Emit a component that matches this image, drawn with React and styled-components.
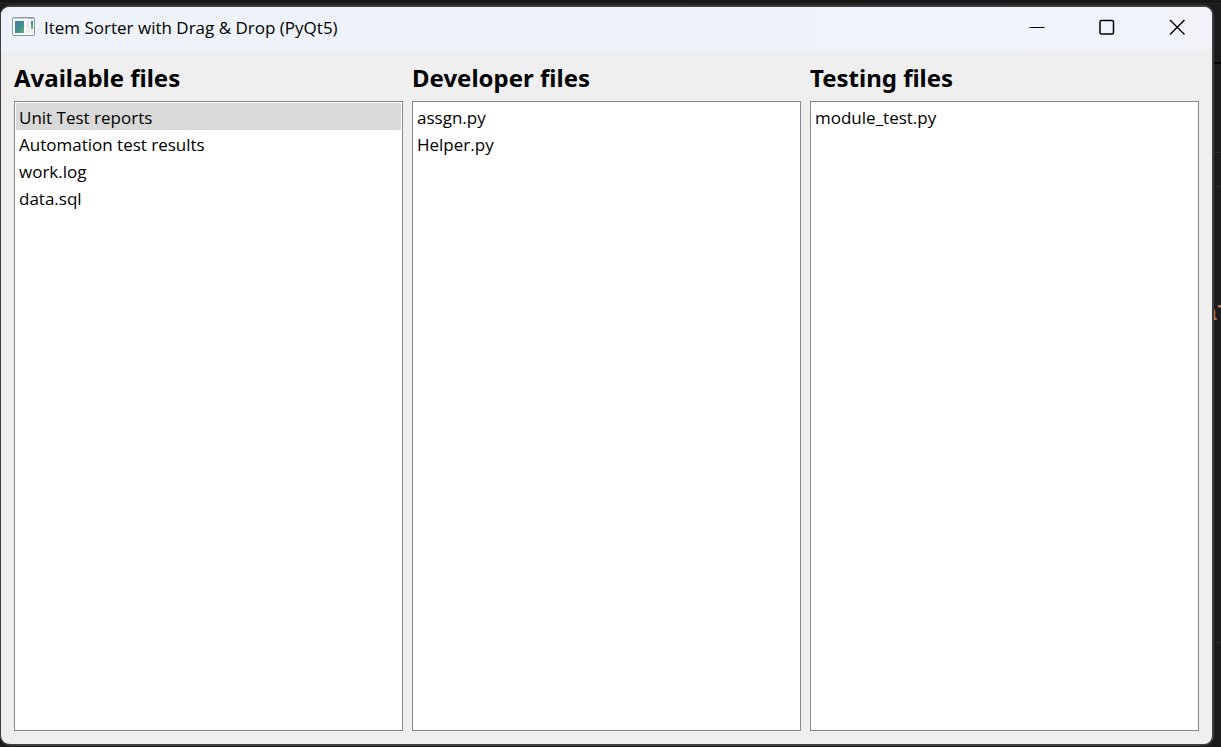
import React, { useState } from 'react';
import styled, { createGlobalStyle } from 'styled-components';

const GlobalStyle = createGlobalStyle`
  *, *::before, *::after { box-sizing: border-box; }
  body {
    margin: 0;
    background: #1c1c1c;
    color: #000;
    font-family: 'Open Sans', 'Noto Sans', sans-serif;
  }
`;

const Desktop = styled.div`
  position: relative;
  display: flex;
  height: 100vh;
  padding: 5px 7px 1px 0;
  overflow: hidden;
  background: linear-gradient(#181818 3px, #262626 3px, #262626 4px, #1c1c1c 4px);
`;

const EditorRule = styled.span`
  position: absolute;
  right: 0;
  top: ${(p) => p.$top}px;
  width: 8px;
  height: ${(p) => p.$height || 1}px;
  background: ${(p) => p.$color || '#2a2a2a'};
`;

const EditorText = styled.span`
  position: absolute;
  left: calc(100% - 17px);
  top: 303px;
  color: #b5765a;
  font: 700 22px/24px 'Liberation Mono', monospace;
  white-space: nowrap;
`;

const Window = styled.main`
  position: relative;
  flex: 1;
  min-width: 0;
  display: flex;
  flex-direction: column;
  overflow: hidden;
  border: 2px solid #3e3e3e;
  border-left-width: 1px;
  border-radius: 10px;
  background: #efefef;
`;

const TitleBar = styled.header`
  display: flex;
  align-items: center;
  height: 43px;
  padding: 0 0 4px 11px;
  background: linear-gradient(90deg, #edf3f8, #eff3fb 80%, #f1f3f9);
`;

const Title = styled.h1`
  flex: 1;
  margin: 0 0 0 8px;
  padding-top: 2px;
  font-size: 17px;
  line-height: 24px;
  font-weight: 400;
`;

const WindowControls = styled.div`
  display: flex;
  align-self: stretch;
`;

const ControlButton = styled.button`
  display: flex;
  align-items: center;
  justify-content: center;
  width: 70px;
  padding: 0;
  border: 0;
  background: transparent;
  color: #000;
`;

const Columns = styled.div`
  flex: 1;
  min-height: 0;
  display: grid;
  grid-template-columns: repeat(3, minmax(0, 1fr));
  gap: 9px;
  padding: 13px;
`;

const Column = styled.section`
  display: flex;
  flex-direction: column;
  min-height: 0;
`;

const ColumnTitle = styled.h2`
  margin: 0 0 8px;
  font-family: 'Noto Sans', 'Open Sans', sans-serif;
  font-size: 24px;
  line-height: 30px;
  font-weight: 700;
`;

const FileList = styled.ul`
  flex: 1;
  margin: 0;
  padding: 1px;
  list-style: none;
  overflow: auto;
  border: 1px solid #828790;
  background: #fff;
`;

const FileItem = styled.li`
  padding: 2px 3px 0;
  border-radius: 2px;
  background: ${(p) => (p.$selected ? '#d9d9d9' : 'transparent')};
  font-size: 17px;
  line-height: 25px;
  cursor: default;
`;

const AppIcon = () => (
  <svg width="24" height="20" viewBox="0 0 24 20" aria-hidden="true">
    <defs>
      <linearGradient id="screen" x1="0" y1="0" x2="1" y2="1">
        <stop offset="0" stopColor="#3f7fa8" />
        <stop offset="0.5" stopColor="#428d90" />
        <stop offset="1" stopColor="#62b078" />
      </linearGradient>
      <linearGradient id="strip" x1="0" y1="0" x2="0" y2="1">
        <stop offset="0" stopColor="#467fae" />
        <stop offset="1" stopColor="#66b078" />
      </linearGradient>
    </defs>
    <rect x="0.5" y="0.5" width="22" height="18" rx="1" fill="#fafafa" stroke="#8d979e" />
    <path d="M1 1.5h21" stroke="#c5d0d8" />
    <path d="M16 1.5h5" stroke="#9eafbd" />
    <rect x="3" y="4" width="9" height="12" fill="url(#screen)" />
    <path d="M3 8c4 0 7-2 9-4H3z" fill="#397aa5" opacity="0.5" />
    <rect x="14" y="4" width="4" height="7" fill="#ececec" />
    <rect x="14" y="12" width="4" height="4" fill="#ececec" />
    <rect x="19" y="4" width="2" height="8" fill="url(#strip)" />
    <rect x="19" y="13" width="2" height="3" fill="#ececec" />
  </svg>
);

const ControlIcon = ({ children }) => (
  <svg width="16" height="16" viewBox="0 0 16 16" fill="none" stroke="currentColor" aria-hidden="true">
    {children}
  </svg>
);

const initialColumns = [
  { title: 'Available files', files: ['Unit Test reports', 'Automation test results', 'work.log', 'data.sql'] },
  { title: 'Developer files', files: ['assgn.py', 'Helper.py'] },
  { title: 'Testing files', files: ['module_test.py'] },
];

export default function App() {
  const [columns, setColumns] = useState(initialColumns);
  const [selected, setSelected] = useState('Unit Test reports');

  const dropInto = (title) => (event) => {
    event.preventDefault();
    const file = event.dataTransfer.getData('text/plain');
    if (!file) return;
    setColumns((current) =>
      current.map((column) => {
        const files = column.files.filter((name) => name !== file);
        return { ...column, files: column.title === title ? [...files, file] : files };
      })
    );
  };

  return (
    <>
      <GlobalStyle />
      <Desktop>
        <EditorRule $top={62} $height={2} $color="#050505" />
        <EditorRule $top={152} />
        <EditorRule $top={186} />
        <EditorRule $top={642} />
        <EditorText aria-hidden="true">aT</EditorText>
        <Window>
          <TitleBar>
            <AppIcon />
            <Title>Item Sorter with Drag &amp; Drop (PyQt5)</Title>
            <WindowControls>
              <ControlButton type="button" aria-label="Minimize">
                <ControlIcon><path d="M0.5 8.5h15" /></ControlIcon>
              </ControlButton>
              <ControlButton type="button" aria-label="Maximize">
                <ControlIcon><rect x="1" y="1.5" width="13.5" height="13.5" rx="1.5" strokeWidth="1.5" /></ControlIcon>
              </ControlButton>
              <ControlButton type="button" aria-label="Close">
                <ControlIcon><path d="M1 1l14.5 14.5M15.5 1L1 15.5" strokeWidth="1.4" /></ControlIcon>
              </ControlButton>
            </WindowControls>
          </TitleBar>
          <Columns>
            {columns.map(({ title, files }) => (
              <Column key={title}>
                <ColumnTitle>{title}</ColumnTitle>
                <FileList
                  role="listbox"
                  aria-label={title}
                  onDragOver={(event) => event.preventDefault()}
                  onDrop={dropInto(title)}
                >
                  {files.map((file) => (
                    <FileItem
                      key={file}
                      role="option"
                      aria-selected={file === selected}
                      $selected={file === selected}
                      draggable
                      onClick={() => setSelected(file)}
                      onDragStart={(event) => event.dataTransfer.setData('text/plain', file)}
                    >
                      {file}
                    </FileItem>
                  ))}
                </FileList>
              </Column>
            ))}
          </Columns>
        </Window>
      </Desktop>
    </>
  );
}
